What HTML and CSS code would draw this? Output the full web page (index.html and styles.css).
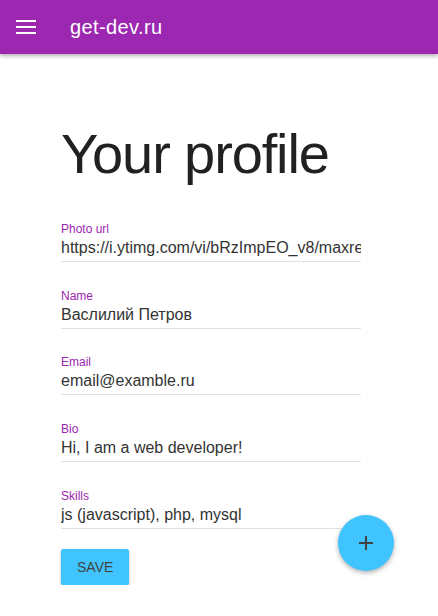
FILE: index.html
```html
<!DOCTYPE html>
<html lang="en">
<head>
<meta charset="utf-8">
<title>get-dev.ru</title>
<link rel="stylesheet" href="styles.css">
</head>
<body>
<header class="toolbar">
  <button class="menu-btn" aria-label="menu">
    <svg width="20" height="14" viewBox="0 0 20 14"><rect x="0" y="0" width="20" height="2" fill="#fff"/><rect x="0" y="6" width="20" height="2" fill="#fff"/><rect x="0" y="12" width="20" height="2" fill="#fff"/></svg>
  </button>
  <span class="title">get-dev.ru</span>
</header>
<main class="content">
  <h1 class="heading">Your profile</h1>
  <form class="form">
    <label class="field"><span class="label">Photo url</span><input class="input" value="https://i.ytimg.com/vi/bRzImpEO_v8/maxresdefault.jpg"></label>
    <label class="field"><span class="label">Name</span><input class="input" value="Васлилий Петров"></label>
    <label class="field"><span class="label">Email</span><input class="input" value="email@examble.ru"></label>
    <label class="field"><span class="label">Bio</span><input class="input" value="Hi, I am a web developer!"></label>
    <label class="field"><span class="label">Skills</span><input class="input" value="js (javascript), php, mysql"></label>
    <div class="actions"><button type="button" class="save-btn">SAVE</button></div>
  </form>
</main>
<button class="fab" aria-label="add">
  <svg width="14" height="14" viewBox="0 0 14 14"><rect x="6" y="0" width="2" height="14" fill="#424242"/><rect x="0" y="6" width="14" height="2" fill="#424242"/></svg>
</button>
</body>
</html>
```
FILE: styles.css
```css
html, body {
  margin: 0;
  padding: 0;
  background: #fff;
  font-family: "Liberation Sans", Arial, sans-serif;
}
.toolbar {
  height: 54px;
  background: #9c27b0;
  display: flex;
  align-items: center;
  box-shadow: 0 2px 4px rgba(0,0,0,0.3);
  position: relative;
}
.menu-btn {
  border: none;
  background: none;
  padding: 0;
  margin-left: 16px;
  width: 20px;
  height: 14px;
  display: flex;
}
.title {
  margin-left: 34px;
  color: #fff;
  font-size: 20px;
  line-height: 24px;
  letter-spacing: 0.02em;
  margin-top: -1px;
}
.content {
  padding: 70px 0 0 61px;
}
.heading {
  margin: 0;
  font-weight: 400;
  font-size: 56px;
  line-height: 60px;
  letter-spacing: -0.02em;
  color: #212121;
}
.form {
  width: 300px;
  margin-top: 37.75px;
  display: flex;
  flex-direction: column;
  gap: 26.75px;
}
.field {
  display: flex;
  flex-direction: column;
  border-bottom: 1px solid #e0e0e0;
  padding-bottom: 3px;
}
.label {
  font-size: 12px;
  line-height: 14px;
  color: #9c27b0;
  margin-bottom: 2px;
}
.input {
  border: none;
  outline: none;
  padding: 0;
  margin: 0;
  font-family: "Liberation Sans", Arial, sans-serif;
  font-size: 16px;
  line-height: 20px;
  height: 20px;
  color: #333;
  background: transparent;
  width: 100%;
}
.actions {
  margin-top: -6.75px;
}
.save-btn {
  height: 36px;
  padding: 0 16px;
  border: none;
  border-radius: 2px;
  background: #40c4ff;
  color: #424242;
  font-family: "Liberation Sans", Arial, sans-serif;
  font-size: 14px;
  box-shadow: 0 2px 3px rgba(0,0,0,0.3);
}
.fab {
  position: absolute;
  left: 338px;
  top: 515px;
  width: 56px;
  height: 56px;
  border-radius: 50%;
  border: none;
  background: #40c4ff;
  box-shadow: 0 2px 5px rgba(0,0,0,0.3);
  display: flex;
  align-items: center;
  justify-content: center;
  padding: 0;
}
```
